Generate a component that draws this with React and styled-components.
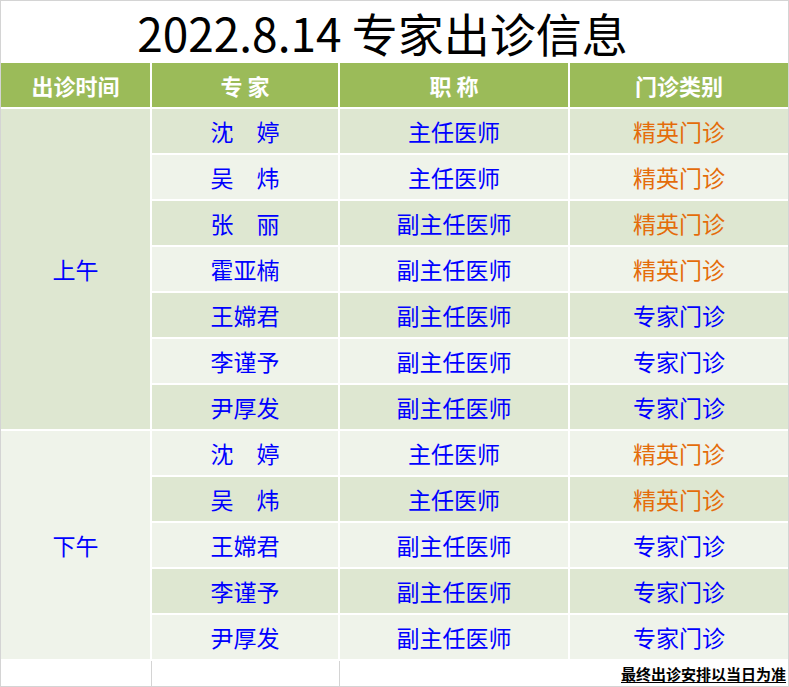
import React from 'react';
import styled, { createGlobalStyle } from 'styled-components';

const GlobalStyle = createGlobalStyle`
  html, body {
    margin: 0;
    padding: 0;
    background: #ffffff;
  }
  body {
    font-family: "Noto Sans CJK SC", "Microsoft YaHei", sans-serif;
  }
`;

const colors = {
  header: '#9bbb59',
  dark: '#dee7d1',
  light: '#eff3ea',
  blue: '#0000ff',
  orange: '#e46c0a',
  line: '#d4d4d4',
};

const Sheet = styled.div`
  width: 789px;
  height: 687px;
  box-sizing: border-box;
  border: 1px solid ${colors.line};
  background: #ffffff;
  display: flex;
  flex-direction: column;
`;

const Title = styled.div`
  height: 62px;
  display: flex;
  align-items: center;
  justify-content: center;
  padding-right: 24px;
  font-size: 46px;
  line-height: 1;
  color: #000000;
`;

const Table = styled.div`
  display: grid;
  grid-template-columns: 149px 186px 228px 218px;
  grid-template-rows: 44px repeat(12, 44px) 25px;
  column-gap: 2px;
  row-gap: 2px;
  background: #ffffff;
`;

const HeadCell = styled.div`
  background: ${colors.header};
  color: #ffffff;
  font-weight: 700;
  font-size: 22px;
  line-height: 1;
  display: flex;
  align-items: center;
  justify-content: center;
  white-space: pre;
`;

const Cell = styled.div`
  background: ${(p) => (p.$dark ? colors.dark : colors.light)};
  color: ${(p) => (p.$accent ? colors.orange : colors.blue)};
  font-size: 23px;
  line-height: 1;
  display: flex;
  align-items: center;
  justify-content: center;
  white-space: pre;
`;

const GroupCell = styled(Cell)`
  grid-row: span ${(p) => p.$span};
`;

const FootCell = styled.div`
  background: #ffffff;
  grid-column: span ${(p) => p.$span || 1};
  box-shadow: ${(p) => (p.$rule ? `-1px 0 0 ${colors.line}` : 'none')};
  display: flex;
  align-items: center;
  justify-content: flex-end;
  padding-right: 2px;
`;

const Note = styled.span`
  font-size: 15px;
  font-weight: 700;
  line-height: 1;
  color: #000000;
  text-decoration: underline;
  text-underline-offset: 2px;
`;

const groups = [
  {
    time: '上午',
    rows: [
      ['沈　婷', '主任医师', '精英门诊'],
      ['吴　炜', '主任医师', '精英门诊'],
      ['张　丽', '副主任医师', '精英门诊'],
      ['霍亚楠', '副主任医师', '精英门诊'],
      ['王嫦君', '副主任医师', '专家门诊'],
      ['李谨予', '副主任医师', '专家门诊'],
      ['尹厚发', '副主任医师', '专家门诊'],
    ],
  },
  {
    time: '下午',
    rows: [
      ['沈　婷', '主任医师', '精英门诊'],
      ['吴　炜', '主任医师', '精英门诊'],
      ['王嫦君', '副主任医师', '专家门诊'],
      ['李谨予', '副主任医师', '专家门诊'],
      ['尹厚发', '副主任医师', '专家门诊'],
    ],
  },
];

export default function App() {
  let index = 0;
  return (
    <>
      <GlobalStyle />
      <Sheet>
        <Title>2022.8.14 专家出诊信息</Title>
        <Table>
          <HeadCell>出诊时间</HeadCell>
          <HeadCell>专 家</HeadCell>
          <HeadCell>职 称</HeadCell>
          <HeadCell>门诊类别</HeadCell>
          {groups.map((group, g) => {
            const firstDark = index % 2 === 0;
            return group.rows.map((row, r) => {
              const dark = index % 2 === 0;
              index += 1;
              return (
                <React.Fragment key={`${g}-${r}`}>
                  {r === 0 && (
                    <GroupCell $span={group.rows.length} $dark={firstDark}>
                      {group.time}
                    </GroupCell>
                  )}
                  <Cell $dark={dark}>{row[0]}</Cell>
                  <Cell $dark={dark}>{row[1]}</Cell>
                  <Cell $dark={dark} $accent={row[2] === '精英门诊'}>
                    {row[2]}
                  </Cell>
                </React.Fragment>
              );
            });
          })}
          <FootCell />
          <FootCell $rule />
          <FootCell $rule $span={2}>
            <Note>最终出诊安排以当日为准</Note>
          </FootCell>
        </Table>
      </Sheet>
    </>
  );
}
